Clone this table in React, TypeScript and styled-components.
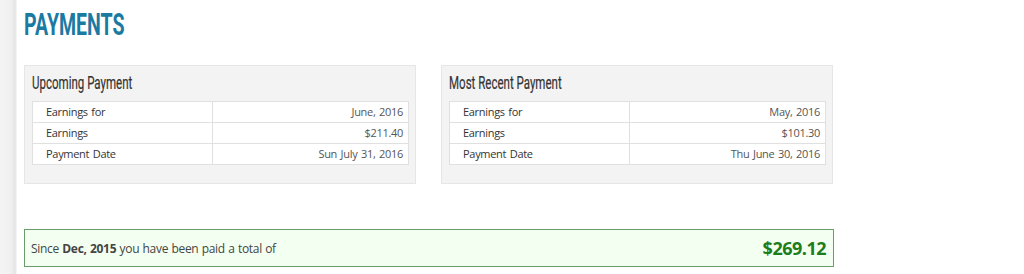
import styled, { createGlobalStyle } from 'styled-components';

const GlobalStyle = createGlobalStyle`
  html, body {
    margin: 0;
    padding: 0;
    background: #fff;
  }
  body {
    font-family: 'Open Sans', 'Liberation Sans', sans-serif;
    color: #333;
  }
`;

const Page = styled.div`
  display: flex;
  min-height: 100vh;
`;

const SideEdge = styled.div`
  width: 17px;
  flex: none;
  background: linear-gradient(to right, #f4f4f4 0, #f0f0f0 11px, #e4e4e4 15px, #ededed 16px, #fafafa 17px);
`;

const Main = styled.main`
  padding: 9px 0 0 7px;
  width: 810px;
`;

const Condensed = styled.span<{ $scale: number }>`
  display: inline-block;
  transform: scaleX(${(p) => p.$scale});
  transform-origin: left center;
  white-space: nowrap;
`;

const Title = styled.h1`
  margin: 0;
  height: 31px;
  font-family: Roboto, 'Liberation Sans', sans-serif;
  font-weight: 700;
  font-size: 31px;
  line-height: 31px;
  color: #1b7aa2;
`;

const Panels = styled.div`
  display: grid;
  grid-template-columns: 392px 392px;
  column-gap: 25px;
  margin-top: 25px;
`;

const Panel = styled.section`
  background: #f3f3f3;
  border: 1px solid #e6e6e6;
  padding: 8px 6px 18px 7px;
`;

const PanelHeading = styled.h2`
  margin: 0 0 9px;
  height: 18px;
  font-family: Roboto, 'Liberation Sans', sans-serif;
  font-weight: 400;
  font-size: 18px;
  line-height: 18px;
  color: #333;
  -webkit-text-stroke: 0.2px #333;
`;

const Table = styled.table`
  width: 100%;
  border-collapse: collapse;
  background: #fff;
  border: 1px solid #d9d9d9;
  font-size: 11px;
  letter-spacing: -0.3px;
  word-spacing: 1px;
  color: #333;
`;

const Cell = styled.td<{ $align?: 'left' | 'right' }>`
  height: 20px;
  padding: 0 ${(p) => (p.$align === 'right' ? '5px' : '4px')} 0 ${(p) => (p.$align === 'right' ? '4px' : '13px')};
  border: 1px solid #e0e0e0;
  text-align: ${(p) => p.$align ?? 'left'};
  width: ${(p) => (p.$align === 'right' ? '52%' : '48%')};
  line-height: 20px;
  color: ${(p) => (p.$align === 'right' ? '#555' : '#333')};
`;

const Summary = styled.div`
  display: flex;
  align-items: center;
  justify-content: space-between;
  margin-top: 45px;
  height: 36px;
  padding: 0 7px 0 6px;
  background: #f3fff1;
  border: 1px solid #6b9a6b;
  font-size: 12px;
  letter-spacing: -0.3px;
  word-spacing: 0.5px;
  color: #444;
`;

const Total = styled.span`
  font-size: 18px;
  font-weight: 700;
  letter-spacing: -0.5px;
  color: #1d7d1d;
`;

type Row = [string, string];

const upcoming: Row[] = [
  ['Earnings for', 'June, 2016'],
  ['Earnings', '$211.40'],
  ['Payment Date', 'Sun July 31, 2016'],
];

const recent: Row[] = [
  ['Earnings for', 'May, 2016'],
  ['Earnings', '$101.30'],
  ['Payment Date', 'Thu June 30, 2016'],
];

const PaymentPanel = ({ title, rows }: { title: string; rows: Row[] }) => (
  <Panel>
    <PanelHeading>
      <Condensed $scale={0.64}>{title}</Condensed>
    </PanelHeading>
    <Table>
      <tbody>
        {rows.map(([label, value]) => (
          <tr key={label}>
            <Cell>{label}</Cell>
            <Cell $align="right">{value}</Cell>
          </tr>
        ))}
      </tbody>
    </Table>
  </Panel>
);

export default function App() {
  return (
    <>
      <GlobalStyle />
      <Page>
        <SideEdge />
        <Main>
          <Title>
            <Condensed $scale={0.63}>PAYMENTS</Condensed>
          </Title>
          <Panels>
            <PaymentPanel title="Upcoming Payment" rows={upcoming} />
            <PaymentPanel title="Most Recent Payment" rows={recent} />
          </Panels>
          <Summary>
            <span>
              Since <b>Dec, 2015</b> you have been paid a total of
            </span>
            <Total>$269.12</Total>
          </Summary>
        </Main>
      </Page>
    </>
  );
}
